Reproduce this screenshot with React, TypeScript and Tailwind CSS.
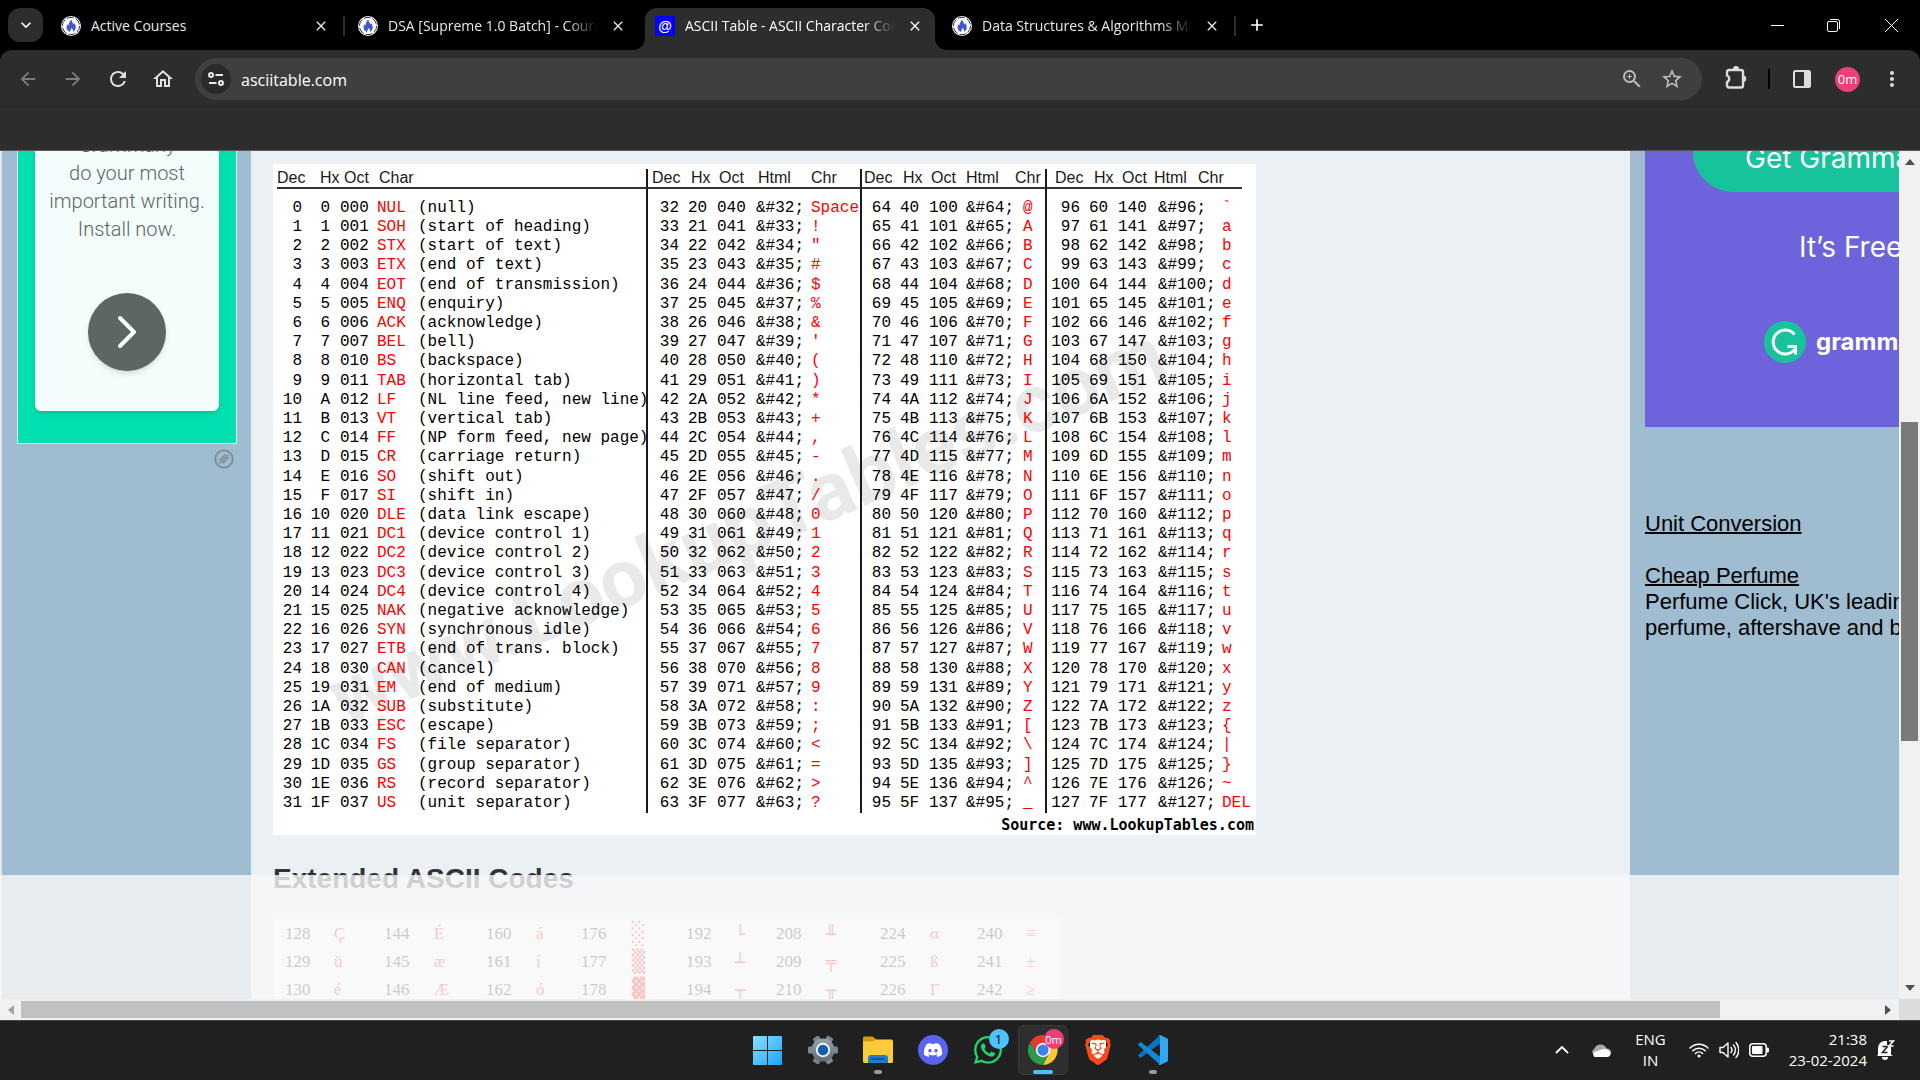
import React from "react";
import {
  MdArrowBack,
  MdArrowForward,
  MdRefresh,
  MdOutlineHome,
  MdZoomIn,
  MdStarBorder,
  MdMoreVert,
  MdClose,
  MdAdd,
  MdKeyboardArrowDown,
} from "react-icons/md";
import { FaDiscord, FaWhatsapp } from "react-icons/fa";
import { SiBrave } from "react-icons/si";

/* ---------- data ---------- */

const CONTROL: [string, string][] = [
  ["NUL", "(null)"],
  ["SOH", "(start of heading)"],
  ["STX", "(start of text)"],
  ["ETX", "(end of text)"],
  ["EOT", "(end of transmission)"],
  ["ENQ", "(enquiry)"],
  ["ACK", "(acknowledge)"],
  ["BEL", "(bell)"],
  ["BS", "(backspace)"],
  ["TAB", "(horizontal tab)"],
  ["LF", "(NL line feed, new line)"],
  ["VT", "(vertical tab)"],
  ["FF", "(NP form feed, new page)"],
  ["CR", "(carriage return)"],
  ["SO", "(shift out)"],
  ["SI", "(shift in)"],
  ["DLE", "(data link escape)"],
  ["DC1", "(device control 1)"],
  ["DC2", "(device control 2)"],
  ["DC3", "(device control 3)"],
  ["DC4", "(device control 4)"],
  ["NAK", "(negative acknowledge)"],
  ["SYN", "(synchronous idle)"],
  ["ETB", "(end of trans. block)"],
  ["CAN", "(cancel)"],
  ["EM", "(end of medium)"],
  ["SUB", "(substitute)"],
  ["ESC", "(escape)"],
  ["FS", "(file separator)"],
  ["GS", "(group separator)"],
  ["RS", "(record separator)"],
  ["US", "(unit separator)"],
];

const EXTENDED: string[][] = [
  ["128", "Ç", "144", "É", "160", "á", "176", "░", "192", "└", "208", "╨", "224", "α", "240", "≡"],
  ["129", "ü", "145", "æ", "161", "í", "177", "▒", "193", "┴", "209", "╤", "225", "ß", "241", "±"],
  ["130", "é", "146", "Æ", "162", "ó", "178", "▓", "194", "┬", "210", "╥", "226", "Γ", "242", "≥"],
];

const hex = (n: number) => n.toString(16).toUpperCase();
const oct = (n: number) => n.toString(8).padStart(3, "0");
const glyph = (n: number) => (n === 32 ? "Space" : n === 127 ? "DEL" : String.fromCharCode(n));

/* ---------- small drawings ---------- */

function FlameIcon() {
  return (
    <svg viewBox="0 0 20 20" className="size-5 shrink-0">
      <circle cx="10" cy="10" r="10" fill="#f4f4f6" />
      <circle cx="10" cy="10" r="8.6" fill="none" stroke="#2f3548" strokeWidth="1" strokeDasharray="7 2" />
      <circle cx="10" cy="10" r="7.6" fill="#fff" />
      <path
        d="M10.3 3.6c.2 2 1.6 3 2 4.700.5-.3.7-.8.8-1.300 1 1.400 1.900 3 1.600 4.900-.2 1.700-1.200 3-2.600 3.900.3-1.500-.3-2.700-1.500-3.900-.4 1.600-1.700 2.300-1.500 4.100-2-.7-3.600-2.300-3.600-4.400 0-1.600.8-2.500 1.500-3.500.2.6.5 1 .9 1.300C7.700 7.200 8.600 5.200 10.300 3.600z"
        fill="#4458c8"
      />
    </svg>
  );
}

function AtIcon() {
  return (
    <span className="flex size-5 shrink-0 items-center justify-center bg-[#0000ff] font-['Liberation_Sans'] text-sm font-bold leading-none text-white">
      @
    </span>
  );
}

function ChromeIcon() {
  return (
    <svg viewBox="0 0 48 48" className="size-[30px]">
      <path d="M24 13H44.800A24 24 0 0 1 24 48L33.500 29.500z" fill="#fcc934" />
      <path d="M24 13H45.200A24 24 0 0 0 3.200 12L14.500 29.500z" fill="#e33b2e" />
      <path d="M3.200 12A24 24 0 0 0 24 48L33.500 29.500 14.500 29.500z" fill="#2a9b48" />
      <circle cx="24" cy="24" r="11.500" fill="#fff" />
      <circle cx="24" cy="24" r="9" fill="#3b82f1" />
    </svg>
  );
}

function WindowsIcon() {
  return (
    <svg viewBox="0 0 29 29" className="size-[29px]">
      <defs>
        <linearGradient id="win" x1="0" y1="0" x2="1" y2="1" gradientUnits="objectBoundingBox">
          <stop offset="0" stopColor="#8be0ff" />
          <stop offset="1" stopColor="#1ba4f8" />
        </linearGradient>
      </defs>
      <path d="M1 0h13v14H0V1a1 1 0 0 1 1-1zM15 0h13a1 1 0 0 1 1 1v13H15zM0 15h14v14H1a1 1 0 0 1-1-1zM15 15h14v13a1 1 0 0 1-1 1H15z" fill="url(#win)" />
    </svg>
  );
}

function SettingsIcon() {
  return (
    <svg viewBox="0 0 30 30" className="size-[30px]">
      <defs>
        <linearGradient id="gear" x1="0" y1="0" x2="0" y2="1">
          <stop offset="0" stopColor="#98a2ab" />
          <stop offset="1" stopColor="#606a74" />
        </linearGradient>
      </defs>
      {[0, 60, 120].map((a) => (
        <rect key={a} x="0" y="11.500" width="30" height="7" rx="1.500" fill="#7d8790" transform={`rotate(${a} 15 15)`} />
      ))}
      <circle cx="15" cy="15" r="11.500" fill="url(#gear)" />
      <circle cx="15" cy="15" r="7.200" fill="#f2f4f6" />
      <circle cx="15" cy="15" r="5.200" fill="#0f5fae" />
    </svg>
  );
}

function FolderIcon() {
  return (
    <svg viewBox="0 0 30 28" className="h-7 w-[30px]">
      <path d="M0 2a1.500 1.500 0 0 1 1.500-1.500h8L13 3.500V9H0z" fill="#d99a07" />
      <path d="M0 5.500h9.500L12.500 3.500H28.500A1.500 1.500 0 0 1 30 5v20.500a1.500 1.500 0 0 1-1.500 1.500h-27A1.500 1.500 0 0 1 0 25.500z" fill="#fccb3c" />
      <path d="M5 27v-5a3 3 0 0 1 3-3h14a3 3 0 0 1 3 3v5z" fill="#1b7fd0" />
      <path d="M8.500 23h13" stroke="#0b4c94" strokeWidth="1.300" strokeLinecap="round" />
    </svg>
  );
}

function VsCodeIcon() {
  return (
    <svg viewBox="0 0 30 30" className="size-[30px]">
      <path d="M22 0 22 8.500 3.300 22.500Q2.500 23 1.800 22.400L.4 21.100Q-.2 20.400.5 19.700L21 1z" fill="#0b74bd" />
      <path d="M22 30V21.500L3.300 7.500Q2.500 7 1.800 7.600L.4 8.900Q-.2 9.600.5 10.300L21 29z" fill="#1389d3" />
      <path d="M22 0l7 3.200Q30 3.800 30 4.800v20.400q0 1-1 1.600l-7 3.200q-1 .2-1.500-.6 1.500.4 1.500-1.400V2q0-1.800-1.500-1.400Q21-.2 22 0z" fill="#2fa9f0" />
    </svg>
  );
}

function PuzzleIcon() {
  return (
    <svg viewBox="0 0 22 25" className="h-[25px] w-[22px]">
      <path d="M8 4a3 3 0 0 1 6 0z" fill="currentColor" />
      <path d="M18 10.500a3 3 0 0 1 0 6.500z" fill="currentColor" />
      <path
        d="M4 5h12a2 2 0 0 1 2 2v13.500a2 2 0 0 1-2 2H4a2 2 0 0 1-2-2V17a3.500 3.500 0 0 0 0-6.500V7a2 2 0 0 1 2-2z"
        fill="none"
        stroke="currentColor"
        strokeWidth="2.400"
      />
    </svg>
  );
}

function TriangleUp() {
  return <svg viewBox="0 0 10 6" className="h-1.5 w-2.5"><path d="M5 0l5 6H0z" fill="#505050" /></svg>;
}
function TriangleDown() {
  return <svg viewBox="0 0 10 6" className="h-1.5 w-2.5"><path d="M0 0h10L5 6z" fill="#505050" /></svg>;
}

/* ---------- browser chrome ---------- */

function Tab({ title, icon, active, divider, first }: { title: string; icon: React.ReactNode; active?: boolean; divider?: boolean; first?: boolean }) {
  return (
    <div className={"relative flex h-[42px] w-[297px] items-center self-end " + (active ? "text-white" : "text-[#e9e9e9]")}>
      {active && (
        <>
          <div className="absolute inset-y-0 left-0 right-[7px] rounded-t-xl bg-[#2d2d2d]" />
          <svg viewBox="0 0 12 12" className="absolute -left-3 bottom-0 size-3"><path d="M12 0v12H0A12 12 0 0 0 12 0z" fill="#2d2d2d" /></svg>
          <svg viewBox="0 0 12 12" className="absolute -right-[5px] bottom-0 size-3"><path d="M0 0v12h12A12 12 0 0 1 0 0z" fill="#2d2d2d" /></svg>
        </>
      )}
      <div className="relative flex w-full items-center gap-2.5 pb-[7px] pl-2.5 pr-[17px]">
        {icon}
        <span
          className={
            "min-w-0 flex-1 overflow-hidden whitespace-nowrap text-[14px] leading-5 " +
            (first ? "" : "[mask-image:linear-gradient(to_right,#000_85%,transparent)]")
          }
        >
          {title}
        </span>
        <button aria-label="Close tab" className="flex size-5 items-center justify-center">
          <MdClose className="size-4" />
        </button>
      </div>
      {divider && <div className="absolute right-[3px] top-2 h-5 w-0.5 bg-[#2f2f2f]" />}
    </div>
  );
}

function TabStrip() {
  return (
    <div className="flex h-[50px] items-center bg-black pl-2">
      <button aria-label="Search tabs" className="flex h-[34px] w-[35px] items-center justify-center rounded-xl bg-[#2d2d2d] text-white">
        <MdKeyboardArrowDown className="size-5" />
      </button>
      <div className="ml-2 flex h-full">
        <Tab first title="Active Courses" icon={<FlameIcon />} divider />
        <Tab title="DSA [Supreme 1.0 Batch] - Course" icon={<FlameIcon />} />
        <Tab title="ASCII Table - ASCII Character Codes" icon={<AtIcon />} active />
        <Tab title="Data Structures & Algorithms Mastery" icon={<FlameIcon />} divider />
      </div>
      <button aria-label="New tab" className="ml-1 flex size-7 items-center justify-center text-white">
        <MdAdd className="size-5" />
      </button>
      <div className="ml-auto flex h-full items-center text-white">
        <button aria-label="Minimize" className="flex h-full w-14 items-center justify-center">
          <svg viewBox="0 0 13 13" className="size-[13px]"><path d="M0 6.500h13" stroke="currentColor" /></svg>
        </button>
        <button aria-label="Restore" className="flex h-full w-[57px] items-center justify-center">
          <svg viewBox="0 0 13 13" className="size-[13px]" fill="none" stroke="currentColor">
            <rect x=".5" y="2.500" width="10" height="10" rx="1.500" />
            <path d="M3 .5h7.500a2 2 0 0 1 2 2V10" />
          </svg>
        </button>
        <button aria-label="Close window" className="flex h-full w-[58px] items-center justify-center">
          <svg viewBox="0 0 13 13" className="size-[13px]" stroke="currentColor"><path d="M0 0l13 13M13 0L0 13" /></svg>
        </button>
      </div>
    </div>
  );
}

function Toolbar() {
  return (
    <div className="bg-black">
      <div className="flex h-[57px] items-start rounded-t-xl border-b border-[#292929] bg-[#2d2d2d] pl-1.5 pt-2">
        <nav className="flex h-[42px] items-center gap-px text-[#dfdfdf]">
          <button aria-label="Back" className="flex size-11 items-center justify-center text-[#7c7c7c]"><MdArrowBack className="size-[22px]" /></button>
          <button aria-label="Forward" className="flex size-11 items-center justify-center text-[#7c7c7c]"><MdArrowForward className="size-[22px]" /></button>
          <button aria-label="Reload" className="flex size-11 items-center justify-center"><MdRefresh className="size-6" /></button>
          <button aria-label="Home" className="flex size-11 items-center justify-center"><MdOutlineHome className="size-6" /></button>
        </nav>
        <div className="ml-2.5 flex h-[42px] flex-1 items-center rounded-full bg-[#3f3f3f] pl-1.5 pr-2.5">
          <button aria-label="Site information" className="flex size-[30px] shrink-0 items-center justify-center rounded-full bg-[#2a2a2a]">
            <svg viewBox="0 0 16 14" className="h-3.5 w-4" fill="none" stroke="#e8e8e8" strokeWidth="2">
              <circle cx="3" cy="3" r="2" />
              <path d="M7.500 3H15M1 11h7.500" />
              <circle cx="13" cy="11" r="2" />
            </svg>
          </button>
          <input
            aria-label="Address"
            defaultValue="asciitable.com"
            className="ml-2.5 min-w-0 flex-1 bg-transparent pt-0.5 text-[16px] text-white outline-none"
          />
          <button aria-label="Zoom" className="flex size-10 items-center justify-center text-[#bdbdbd]"><MdZoomIn className="size-6" /></button>
          <button aria-label="Bookmark" className="flex size-10 items-center justify-center text-[#bdbdbd]"><MdStarBorder className="size-6" /></button>
        </div>
        <div className="flex h-[42px] w-[218px] items-center pl-3.5 text-[#dcdcdc]">
          <button aria-label="Extensions" className="flex size-10 items-center justify-center pb-1"><PuzzleIcon /></button>
          <div className="mx-3 h-5 w-0.5 bg-black" />
          <button aria-label="Side panel" className="flex size-10 items-center justify-center">
            <svg viewBox="0 0 18 18" className="size-[18px]">
              <rect x="1" y="1" width="16" height="16" rx="1.500" fill="none" stroke="currentColor" strokeWidth="2" />
              <path d="M11 1h6v16h-6z" fill="currentColor" />
            </svg>
          </button>
          <button aria-label="Profile" className="ml-[13px] flex size-[25px] items-center justify-center rounded-full bg-[#ec407a] text-[13px] leading-none text-white">
            0m
          </button>
          <button aria-label="Menu" className="ml-5 flex size-6 items-center justify-center"><MdMoreVert className="size-6" /></button>
        </div>
      </div>
    </div>
  );
}

/* ---------- page ---------- */

function LeftAd() {
  return (
    <aside className="w-[251px] shrink-0 border-l-2 border-[#e4e8ec] bg-[#9fbcd0] pl-[15px]">
      <div className="h-[293px] w-[220px] border-x border-b border-[#e0efe9] bg-[#00e1af] px-[17px]">
        <div className="flex h-[260px] flex-col items-center overflow-hidden rounded-b-md bg-[#f3fdfb] shadow-md">
          <p className="-mt-5 text-center font-['Roboto'] text-[20px] font-light leading-7 text-[#5d6664]">
            Grammarly
            <br />
            do your most
            <br />
            important writing.
            <br />
            Install now.
          </p>
          <button aria-label="Install" className="mt-[50px] flex size-[78px] shrink-0 items-center justify-center rounded-full bg-[#5c6664] shadow-md">
            <svg viewBox="0 0 20 34" className="h-[34px] w-5" fill="none" stroke="#fff" strokeWidth="4" strokeLinecap="round" strokeLinejoin="round">
              <path d="M3 3l14 14L3 31" />
            </svg>
          </button>
        </div>
      </div>
      <button aria-label="Ad options" className="ml-[197px] mt-[5px] block size-5">
        <svg viewBox="0 0 20 20" className="size-5" fill="none" stroke="#7f8b95" strokeWidth="1.800" strokeLinecap="round">
          <circle cx="10" cy="10" r="8.700" />
          <path d="M5.500 11.500l5.500-5.500M9 14l5.500-5.500M6 14l8-8" strokeWidth="1.500" />
        </svg>
      </button>
    </aside>
  );
}

function RightColumn() {
  return (
    <aside className="w-[269px] shrink-0 overflow-hidden bg-[#9fbcd0] pl-[15px]">
      <div className="h-[276px] w-[400px] overflow-hidden bg-[#6d64dc] font-['Inter'] text-white">
        <button className="-mt-[39px] ml-12 flex h-20 w-[304px] items-end rounded-full bg-[#16c39b] pb-[18px] pl-[52px] text-[28px] leading-8">
          <span className="whitespace-nowrap">Get Grammarly</span>
        </button>
        <p className="ml-[154px] mt-[38px] text-[28px] leading-[34px]">It’s Free</p>
        <div className="ml-[119px] mt-[57px] flex items-center gap-2.5">
          <svg viewBox="0 0 42 42" className="size-[42px]">
            <circle cx="21" cy="21" r="21" fill="#16c39b" />
            <path d="M30.500 13.500A12 12 0 1 0 31 28" fill="none" stroke="#fff" strokeWidth="3" />
            <path d="M23.500 25.500h8v8" fill="none" stroke="#fff" strokeWidth="3" />
          </svg>
          <span className="text-[24px] font-bold leading-8">grammarly</span>
        </div>
      </div>
      <div className="mt-[84px] w-[400px] font-['Liberation_Sans'] text-[22px] leading-[26px] text-black">
        <p><a href="#unit" className="underline decoration-2">Unit Conversion</a></p>
        <p className="mt-[26px]"><a href="#perfume" className="underline decoration-2">Cheap Perfume</a></p>
        <p className="whitespace-nowrap">Perfume Click, UK's leading discount</p>
        <p className="whitespace-nowrap">perfume, aftershave and beauty store</p>
      </div>
    </aside>
  );
}

const TD = "p-0 whitespace-pre";
const RED = TD + " text-[#ff0000]";
const RULE = " border-r-2 border-[#1a1a1a]";
const TH = "p-0 text-left font-normal whitespace-pre border-b-2 border-b-[#333]";

function AsciiTable() {
  return (
    <div className="relative h-[671px] w-[983px] overflow-hidden bg-white pl-1 pt-[5px]">
      <div
        aria-hidden="true"
        className="absolute left-[76px] top-[494px] origin-bottom-left -rotate-[23deg] whitespace-nowrap font-['Roboto'] text-[82px] font-bold leading-[80px] text-[#e9e9e9]"
      >
        www.LookupTables.com
      </div>
      <table className="relative w-[965px] table-fixed border-separate border-spacing-0 font-['Liberation_Mono'] text-[16px] leading-[19px] text-black">
        <colgroup>
          <col className="w-[27px]" />
          <col className="w-[36px]" />
          <col className="w-[37px]" />
          <col className="w-[41px]" />
          <col className="w-[230px]" />
          <col className="w-[36px]" />
          <col className="w-[29px]" />
          <col className="w-[39px]" />
          <col className="w-[55px]" />
          <col className="w-[55px]" />
          <col className="w-[34px]" />
          <col className="w-[29px]" />
          <col className="w-[37px]" />
          <col className="w-[53px]" />
          <col className="w-[32px]" />
          <col className="w-[38px]" />
          <col className="w-[29px]" />
          <col className="w-[40px]" />
          <col className="w-[64px]" />
          <col className="w-[24px]" />
        </colgroup>
        <thead className="font-['Liberation_Sans'] text-[#1a1a1a]">
          <tr className="h-5 leading-[18px]">
            <th className={TH}>Dec</th>
            <th className={TH + " pl-4"}>Hx</th>
            <th className={TH + " pl-1"}>Oct</th>
            <th className={TH + " pl-0.5"}>Char</th>
            <th className={TH + " border-r-2 border-r-[#1a1a1a]"} aria-label="Meaning" />
            <th className={TH + " pl-1"}>Dec</th>
            <th className={TH + " pl-[7px]"}>Hx</th>
            <th className={TH + " pl-1.5"}>Oct</th>
            <th className={TH + " pl-1.5"}>Html</th>
            <th className={TH + " border-r-2 border-r-[#1a1a1a] pl-1"}>Chr</th>
            <th className={TH + " pl-0.5"}>Dec</th>
            <th className={TH + " pl-[7px]"}>Hx</th>
            <th className={TH + " pl-1.5"}>Oct</th>
            <th className={TH + " pl-1"}>Html</th>
            <th className={TH + " border-r-2 border-r-[#1a1a1a]"}>Chr</th>
            <th className={TH + " pl-2"}>Dec</th>
            <th className={TH + " pl-[9px]"}>Hx</th>
            <th className={TH + " pl-2"}>Oct</th>
            <th className={TH}>Html</th>
            <th className={TH}><span className="-ml-5">Chr</span></th>
          </tr>
        </thead>
        <tbody>
          <tr aria-hidden="true" className="h-2.5 leading-[10px]">
            <td colSpan={5} className={"p-0" + RULE} />
            <td colSpan={5} className={"p-0" + RULE} />
            <td colSpan={5} className={"p-0" + RULE} />
            <td colSpan={5} className="p-0" />
          </tr>
          {CONTROL.map(([code, meaning], i) => (
            <tr key={code} className={i % 5 === 4 ? "h-5" : "h-[19px]"}>
              <td className={TD + " pr-0.5 text-right"}>{i}</td>
              <td className={TD + " pr-2.5 text-right"}>{hex(i)}</td>
              <td className={TD}>{oct(i)}</td>
              <td className={RED}>{code}</td>
              <td className={TD + RULE}>{meaning}</td>
              {[32, 64, 96].map((base) => {
                const n = base + i;
                return (
                  <React.Fragment key={base}>
                    <td className={TD + " pr-[5px] text-right"}>{n}</td>
                    <td className={TD + " pl-1"}>{hex(n)}</td>
                    <td className={TD + " pl-1"}>{oct(n)}</td>
                    <td className={TD + " pl-1"}>{"&#" + n + ";"}</td>
                    <td className={RED + (base === 96 ? " pl-1" : base === 64 ? " pl-2" + RULE : " pl-1" + RULE)}>{glyph(n)}</td>
                  </React.Fragment>
                );
              })}
            </tr>
          ))}
        </tbody>
      </table>
      <p className="relative mr-0.5 mt-px whitespace-pre text-right font-['DejaVu_Sans_Mono'] text-[15px] font-bold leading-[22px] text-black">
        Source: www.LookupTables.com
      </p>
    </div>
  );
}

function ExtendedTable() {
  return (
    <div className="h-[420px] w-[787px] bg-white pl-3 pt-0.5">
      <table className="w-[775px] table-fixed font-['Liberation_Serif'] text-[17px] leading-[26px] text-[#111]">
        <colgroup>
          <col className="w-[49px]" />
          <col className="w-[50px]" />
          <col className="w-[50px]" />
          <col className="w-[52px]" />
          <col className="w-[50px]" />
          <col className="w-[45px]" />
          <col className="w-[51px]" />
          <col className="w-[54px]" />
          <col className="w-[49px]" />
          <col className="w-[41px]" />
          <col className="w-[50px]" />
          <col className="w-[54px]" />
          <col className="w-[50px]" />
          <col className="w-[47px]" />
          <col className="w-[49px]" />
          <col className="w-[34px]" />
        </colgroup>
        <tbody>
          {EXTENDED.map((row) => (
            <tr key={row[0]} className="h-7">
              {row.map((cell, i) => (
                <td
                  key={i}
                  className={
                    i % 2 === 0
                      ? "p-0"
                      : i === 7
                        ? "p-0 font-['DejaVu_Sans_Mono'] text-[22px] leading-[26px] text-[#ff0000]"
                        : i === 9 || i === 11
                          ? "p-0 font-['DejaVu_Sans_Mono'] text-[#ff0000]"
                          : "p-0 text-[#ff0000]"
                  }
                >
                  {cell}
                </td>
              ))}
            </tr>
          ))}
        </tbody>
      </table>
    </div>
  );
}

function Page() {
  return (
    <div className="grid min-h-0 flex-1 grid-cols-[minmax(0,1fr)_21px] grid-rows-[minmax(0,1fr)_21px] border-t border-[#5a5a5c]">
      <div className="relative flex overflow-hidden">
        <LeftAd />
        <main className="min-w-0 flex-1 overflow-hidden bg-[#ebf0f5] pl-[22px] pt-[13px]">
          <AsciiTable />
          <h2 className="mt-7 font-['Liberation_Sans'] text-[28px] font-bold leading-8 text-[#333]">Extended ASCII Codes</h2>
          <div className="mt-[23px]">
            <ExtendedTable />
          </div>
        </main>
        <RightColumn />
        <div className="absolute inset-x-0 bottom-0 h-[124px] bg-[#f8f8f8]/80" />
      </div>

      <div className="flex flex-col items-center bg-[#f1f1f1] py-2">
        <TriangleUp />
        <div className="mt-[257px] h-[319px] w-[17px] bg-[#7a7a7a]" />
        <div className="mt-auto"><TriangleDown /></div>
      </div>

      <div className="flex items-center bg-[#f1f1f1] px-2">
        <svg viewBox="0 0 6 10" className="h-2.5 w-1.5"><path d="M6 0v10L0 5z" fill="#a3a3a3" /></svg>
        <div className="ml-[7px] mr-[165px] h-[17px] flex-1 bg-[#c1c1c1]" />
        <svg viewBox="0 0 6 10" className="h-2.5 w-1.5"><path d="M0 0v10l6-5z" fill="#505050" /></svg>
      </div>
      <div className="bg-[#dcdcdc]" />
    </div>
  );
}

/* ---------- taskbar ---------- */

function TaskButton({ label, active, running, children }: { label: string; active?: boolean; running?: boolean; children: React.ReactNode }) {
  return (
    <button
      aria-label={label}
      className={"relative flex size-[50px] items-center justify-center rounded-md " + (active ? "border border-[#3a3a3a] bg-[#2e2e2e]" : "")}
    >
      {children}
      {running && <span className="absolute bottom-px left-[21px] h-1 w-2 rounded-full bg-[#9a9a9a]" />}
      {active && <span className="absolute bottom-0 left-3.5 h-1 w-5 rounded-full bg-[#4cc2ff]" />}
    </button>
  );
}

function Taskbar() {
  return (
    <footer className="grid h-[60px] shrink-0 grid-cols-[1fr_auto_1fr] items-center border-t border-[#454545] bg-[#202020] pb-px text-white">
      <div />
      <div className="flex gap-[5px]">
        <TaskButton label="Start"><WindowsIcon /></TaskButton>
        <TaskButton label="Settings"><SettingsIcon /></TaskButton>
        <TaskButton label="File Explorer" running><FolderIcon /></TaskButton>
        <TaskButton label="Discord">
          <span className="flex size-[30px] items-center justify-center rounded-full bg-[#5865f2]"><FaDiscord className="size-5" /></span>
        </TaskButton>
        <TaskButton label="WhatsApp">
          <FaWhatsapp className="size-8 text-[#25d366]" />
          <span className="absolute right-1 top-1 flex size-5 items-center justify-center rounded-full bg-[#4cc2ff] text-[13px] leading-none text-black">1</span>
        </TaskButton>
        <TaskButton label="Chrome" active>
          <ChromeIcon />
          <span className="absolute right-[3px] top-[3px] flex size-5 items-center justify-center rounded-full bg-[#ec407a] text-[11px] leading-none text-white">0m</span>
        </TaskButton>
        <TaskButton label="Brave">
          <span className="absolute h-[22px] w-4 rounded-b-lg bg-white" />
          <SiBrave className="relative size-[30px] text-[#fb4a1c]" />
        </TaskButton>
        <TaskButton label="VS Code" running><VsCodeIcon /></TaskButton>
      </div>
      <div className="flex items-center justify-end pr-[25px] text-[15px] leading-[21px]">
        <button aria-label="Hidden icons" className="mr-[22px]">
          <svg viewBox="0 0 14 8" className="h-2 w-3.5" fill="none" stroke="#fff" strokeWidth="1.800"><path d="M1 7l6-6 6 6" /></svg>
        </button>
        <svg viewBox="0 0 20 13" className="mr-6 h-[13px] w-5">
          <path d="M4.500 12A4 4 0 0 1 3.500 4.500 6.500 6.500 0 0 1 15.500 4.500 4 4 0 0 1 18 12z" fill="#a9a9a9" />
          <path d="M3.500 13a3.300 3.300 0 0 1 0-5l5-1.800 4-1.200q3-.8 5 1.500A3.600 3.600 0 0 1 17 13z" fill="#fff" />
        </svg>
        <button className="mr-[23px] text-center">ENG<br />IN</button>
        <button aria-label="Network, volume and battery" className="mr-5 flex items-center gap-2.5">
          <svg viewBox="0 0 20 16" className="h-4 w-5" fill="none" stroke="#fff" strokeWidth="1.500" strokeLinecap="round">
            <path d="M1 6a12.500 12.500 0 0 1 18 0M3.800 8.800a8.700 8.700 0 0 1 12.400 0M6.500 11.500a5 5 0 0 1 7 0" />
            <circle cx="10" cy="14" r="1.500" fill="#fff" stroke="none" />
          </svg>
          <svg viewBox="0 0 20 18" className="h-[18px] w-5" fill="none" stroke="#fff" strokeWidth="1.400" strokeLinecap="round" strokeLinejoin="round">
            <path d="M1 6.500h3l5-4.500v14l-5-4.500H1zM12 6.500a4 4 0 0 1 0 5M14.500 4a7.500 7.500 0 0 1 0 10M17 1.500a11.500 11.500 0 0 1 0 15" />
          </svg>
          <svg viewBox="0 0 20 14" className="h-3.5 w-5">
            <rect x=".8" y=".8" width="16.400" height="12.400" rx="3" fill="none" stroke="#fff" strokeWidth="1.500" />
            <rect x="3" y="3" width="10.500" height="8" rx="1" fill="#fff" />
            <path d="M18 4.500h.5a1.500 1.500 0 0 1 1.500 1.500v2a1.500 1.500 0 0 1-1.500 1.500H18z" fill="#fff" />
          </svg>
        </button>
        <button className="mr-2.5 text-right">21:38<br />23-02-2024</button>
        <button aria-label="Notifications">
          <svg viewBox="0 0 18 20" className="h-5 w-[18px]">
            <path d="M1 14.500V8a7 7 0 0 1 7-7h2v4h4v9.500l2 1.500H0z" fill="#fff" />
            <path d="M5 17h6a3 3 0 0 1-6 0z" fill="#fff" />
            <path d="M5.500 6.500h5l-5 6h5" fill="none" stroke="#202020" strokeWidth="1.500" />
            <path d="M12 1h4.500L12 6h4.500" fill="none" stroke="#fff" strokeWidth="1.500" />
          </svg>
        </button>
      </div>
    </footer>
  );
}

export default function App() {
  return (
    <div className="flex h-screen min-h-[600px] flex-col overflow-hidden bg-[#2d2d2d] font-['Open_Sans','Noto_Sans',sans-serif]">
      <TabStrip />
      <Toolbar />
      <div className="h-[43px] shrink-0 bg-[#2d2d2d]" />
      <Page />
      <Taskbar />
    </div>
  );
}
